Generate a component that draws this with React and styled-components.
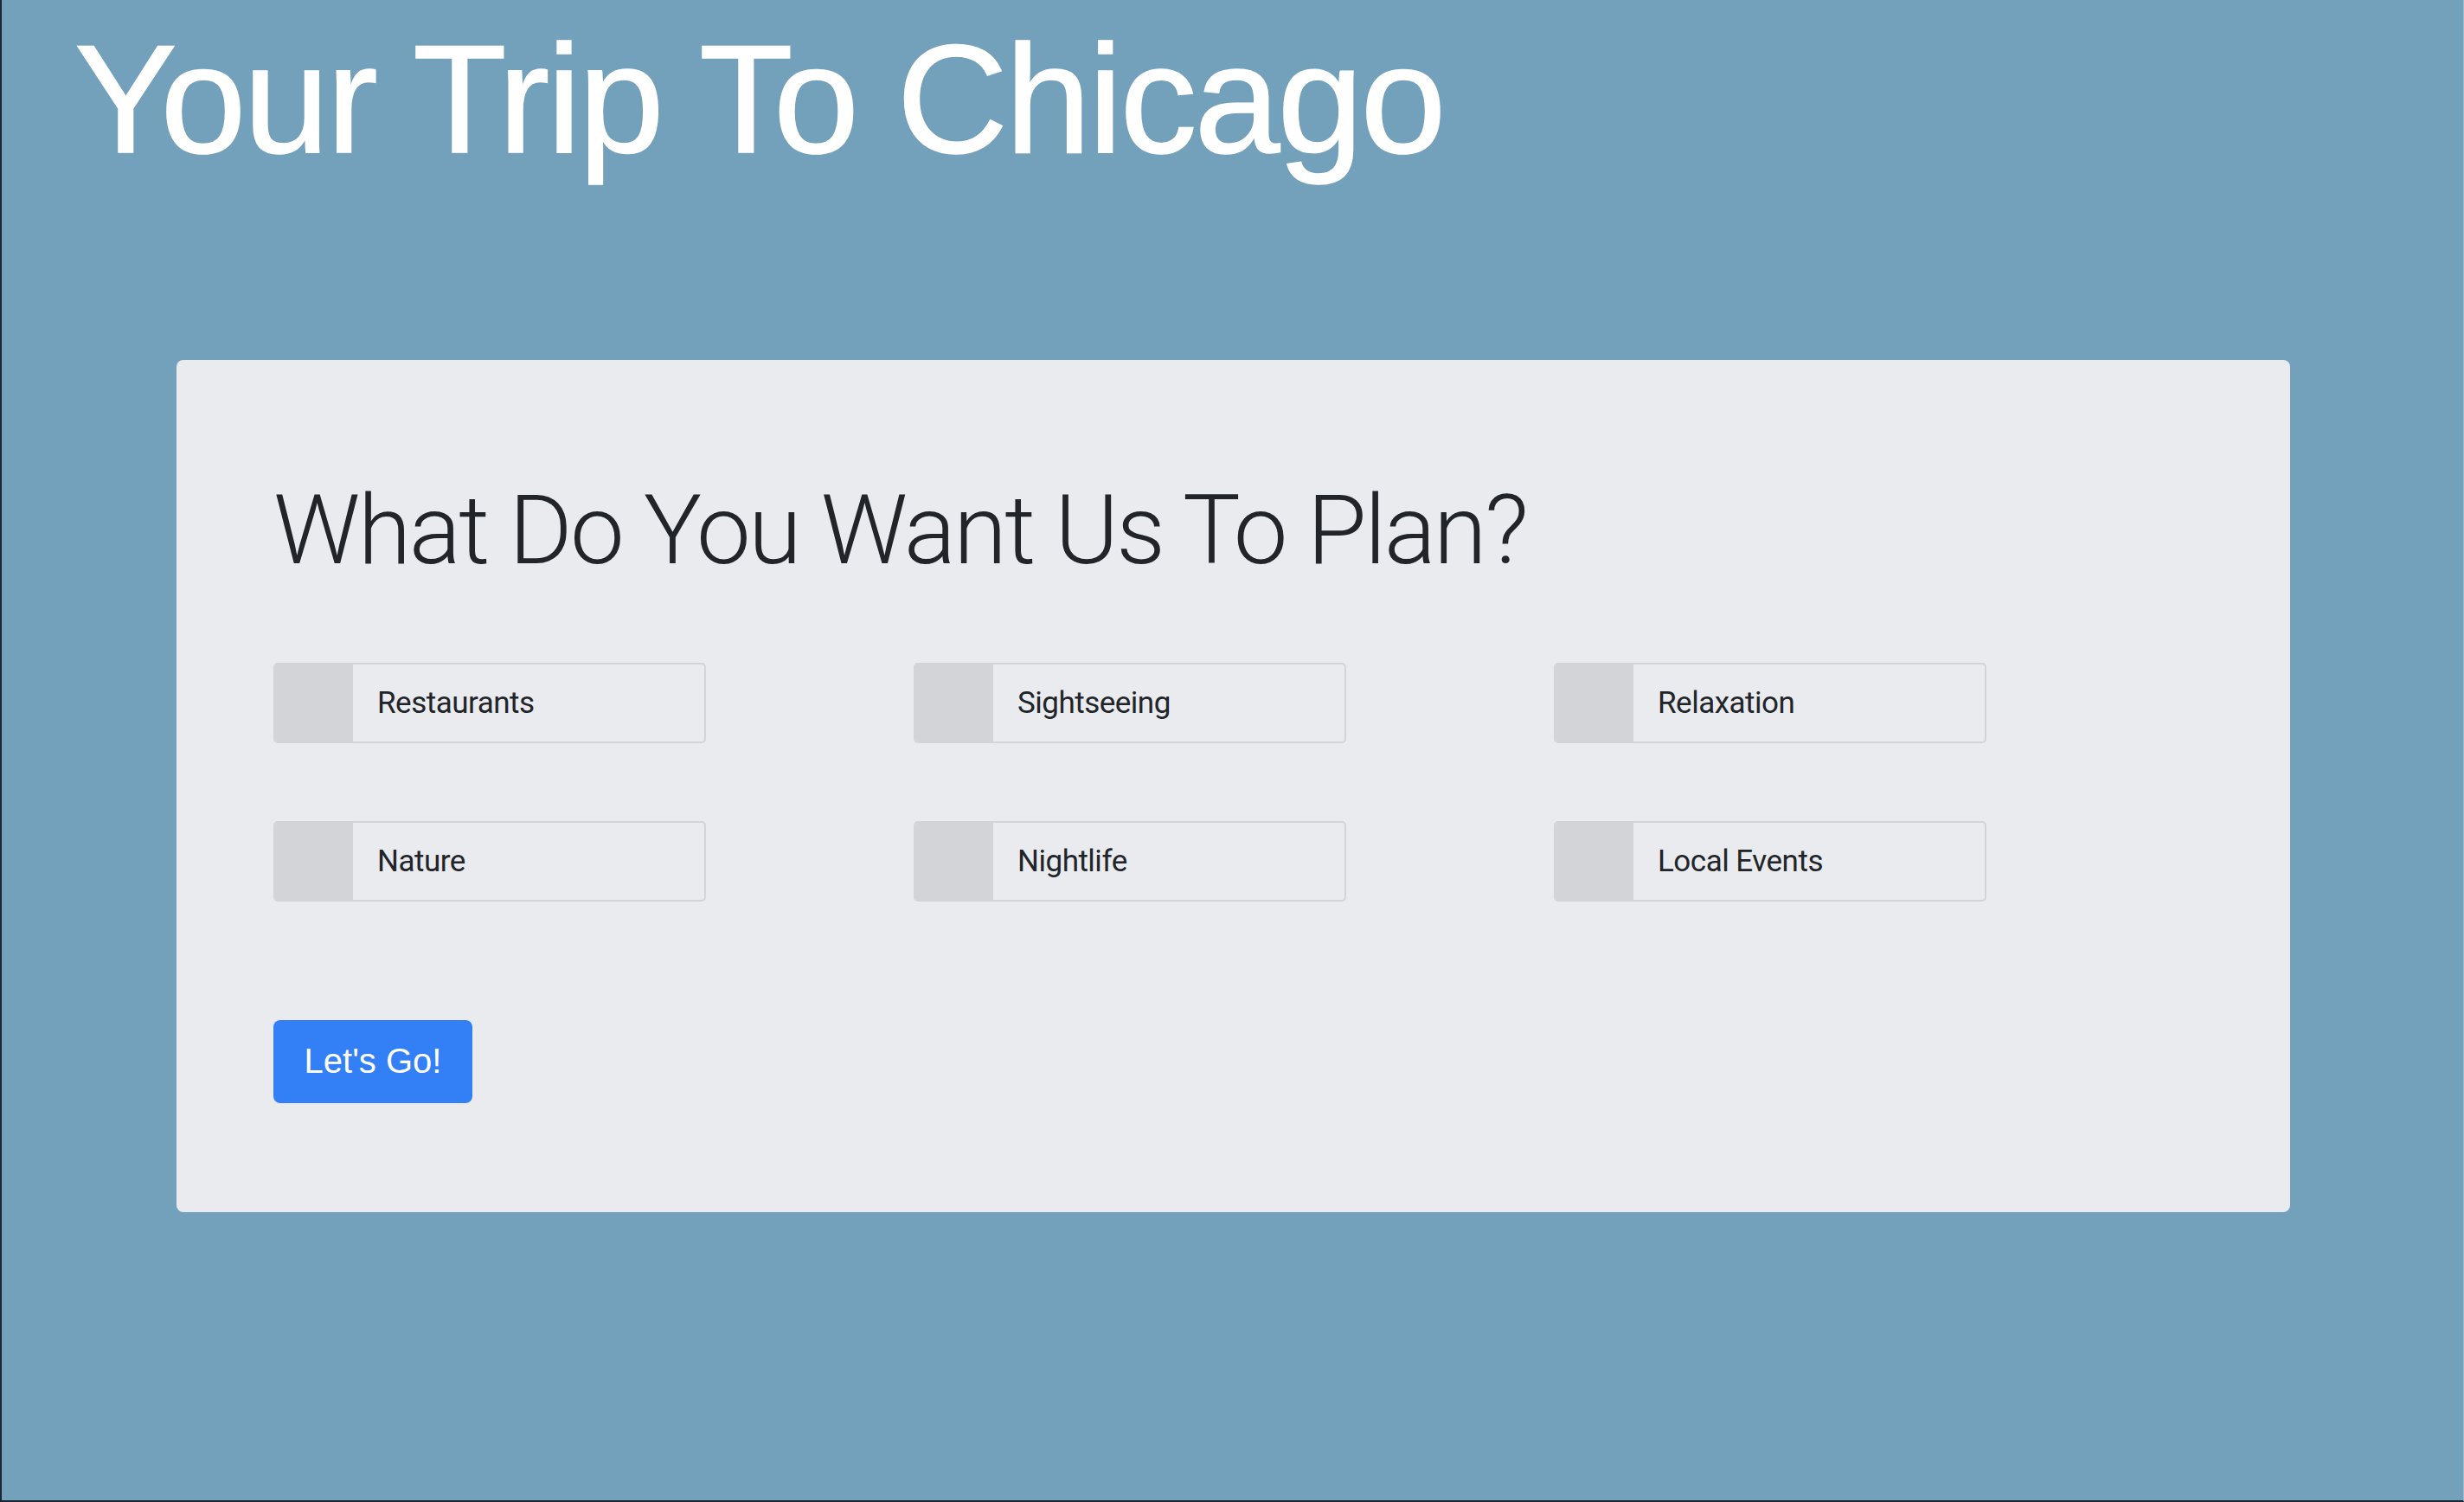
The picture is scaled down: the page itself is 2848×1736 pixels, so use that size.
import styled, { createGlobalStyle } from "styled-components";

const GlobalStyle = createGlobalStyle`
    html, body {
        margin: 0;
        padding: 0;
    }
    body {
        font-family: "Liberation Sans", Arial, sans-serif;
        color: #212529;
    }
`;

const Page = styled.div`
    box-sizing: border-box;
    min-height: 1736px;
    background-color: #73a0ba;
    border-left: 2px solid #1c2633;
    border-bottom: 2px solid #1c2633;
    border-right: 1px solid #9dbbcc;
    padding: 8px 0 0 0;
    display: flex;
    flex-direction: column;
`;

const Title = styled.h1`
    margin: 0;
    padding-left: 84px;
    font-family: "Liberation Sans", Arial, sans-serif;
    font-size: 178px;
    font-weight: 400;
    line-height: 1.2;
    letter-spacing: -3px;
    color: #ffffff;
    -webkit-text-stroke: 1.5px #ffffff;
`;

const Card = styled.section`
    margin: 194px 200px 0 202px;
    padding: 130px 112px 126px 112px;
    background-color: #eaebef;
    border-radius: 8px;
`;

const Heading = styled.h2`
    margin: 0 0 86px 0;
    font-family: Roboto, "Liberation Sans", sans-serif;
    font-size: 112px;
    font-weight: 300;
    line-height: 1.2;
    letter-spacing: -2.6px;
    color: #212529;
`;

const OptionGrid = styled.div`
    display: grid;
    grid-template-columns: repeat(3, 740px);
    row-gap: 90px;
`;

const Option = styled.label`
    box-sizing: border-box;
    display: flex;
    width: 500px;
    height: 93px;
    border: 2px solid #d2d4d7;
    border-radius: 5px;
    overflow: hidden;
    cursor: pointer;
`;

const Tick = styled.span`
    flex: 0 0 90px;
    background-color: #d2d4d7;
`;

const OptionText = styled.span`
    display: flex;
    align-items: center;
    padding-left: 28px;
    font-family: Roboto, "Liberation Sans", sans-serif;
    font-size: 35px;
    letter-spacing: -0.5px;
    color: #212529;
`;

const GoButton = styled.button`
    margin-top: 137px;
    width: 230px;
    height: 96px;
    border: 0;
    border-radius: 8px;
    background-color: #3380f6;
    color: #ffffff;
    font-family: "Liberation Sans", Arial, sans-serif;
    font-size: 40px;
    cursor: pointer;
`;

const options = ["Restaurants", "Sightseeing", "Relaxation", "Nature", "Nightlife", "Local Events"];

export default function App() {
    return <>
        <GlobalStyle />
        <Page>
            <Title>Your Trip To Chicago</Title>
            <Card>
                <Heading>What Do You Want Us To Plan?</Heading>
                <OptionGrid>
                    {options.map((name) => (
                        <Option key={name}>
                            <Tick />
                            <OptionText>{name}</OptionText>
                        </Option>
                    ))}
                </OptionGrid>
                <GoButton type="button">Let's Go!</GoButton>
            </Card>
        </Page>
    </>;
}
